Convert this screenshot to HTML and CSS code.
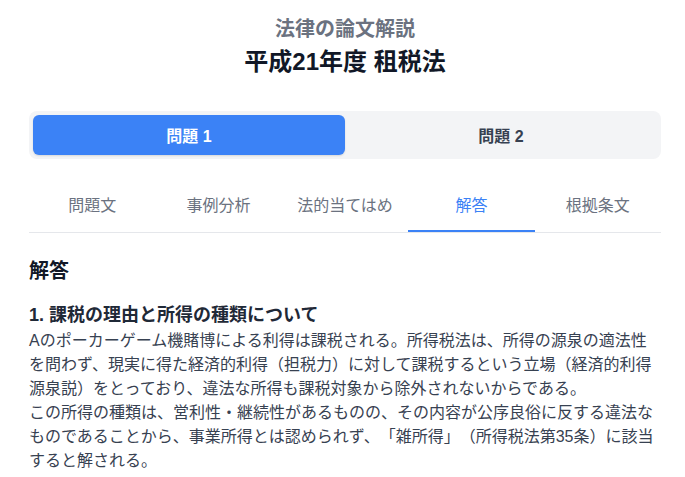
FILE: index.html
```html
<!DOCTYPE html>
<html lang="ja">
<head>
<meta charset="utf-8">
<title>平成21年度 租税法</title>
<link rel="stylesheet" href="styles.css">
</head>
<body>
<div class="page">
  <header class="header">
    <p class="subtitle">法律の論文解説</p>
    <h1 class="title">平成21年度 租税法</h1>
  </header>

  <div class="segment">
    <button class="seg-btn active">問題 1</button>
    <button class="seg-btn">問題 2</button>
  </div>

  <nav class="tabs">
    <div class="tab">問題文</div>
    <div class="tab">事例分析</div>
    <div class="tab">法的当てはめ</div>
    <div class="tab active">解答</div>
    <div class="tab">根拠条文</div>
  </nav>

  <main class="content">
    <h2 class="section-title">解答</h2>
    <h3 class="sub-title">1. 課税の理由と所得の種類について</h3>
    <p class="para">Aのポーカーゲーム機賭博による利得は課税される。所得税法は、所得の源泉の適法性を問わず、現実に得た経済的利得（担税力）に対して課税するという立場（経済的利得源泉説）をとっており、違法な所得も課税対象から除外されないからである。</p>
    <p class="para">この所得の種類は、営利性・継続性があるものの、その内容が公序良俗に反する違法なものであることから、事業所得とは認められず、「雑所得」（所得税法第35条）に該当すると解される。</p>
  </main>
</div>
</body>
</html>
```

FILE: styles.css
```css
* {
  box-sizing: border-box;
}

html, body {
  margin: 0;
  padding: 0;
  background: #ffffff;
}

body {
  font-family: "Liberation Sans", "Noto Sans CJK JP", sans-serif;
  color: #374151;
  text-spacing-trim: space-all;
}

.page {
  padding: 15px 24px 0 29px;
}

.header {
  text-align: center;
  margin-bottom: 33px;
}

.subtitle {
  margin: 0;
  font-size: 20px;
  line-height: 28px;
  font-weight: 700;
  color: #6b7280;
}

.title {
  margin: 3px 0 0;
  font-size: 24px;
  line-height: 32px;
  font-weight: 700;
  color: #111827;
}

.segment {
  display: grid;
  grid-template-columns: 1fr 1fr;
  padding: 4px;
  background: #f3f4f6;
  border-radius: 8px;
}

.seg-btn {
  border: 0;
  margin: 0;
  height: 40px;
  font-family: inherit;
  font-size: 16px;
  font-weight: 700;
  color: #374151;
  background: transparent;
  border-radius: 6px;
  padding: 0;
}

.seg-btn.active {
  background: #3b82f6;
  color: #ffffff;
  box-shadow: 0 1px 2px rgba(0, 0, 0, 0.12);
}

.tabs {
  display: grid;
  grid-template-columns: repeat(5, 1fr);
  margin-top: 23px;
  border-bottom: 1px solid #e5e7eb;
}

.tab {
  text-align: center;
  font-size: 16px;
  line-height: 24px;
  padding: 12px 0;
  color: #6b7280;
  border-bottom: 2px solid transparent;
}

.tab.active {
  color: #3b82f6;
  border-bottom-color: #3b82f6;
}

.content {
  padding-top: 24px;
}

.section-title {
  margin: 0 0 16px;
  font-size: 20px;
  line-height: 28px;
  font-weight: 700;
  color: #111827;
}

.sub-title {
  margin: 0;
  font-size: 18px;
  line-height: 28px;
  font-weight: 700;
  color: #1f2937;
}

.para {
  margin: 0;
  font-size: 16px;
  line-height: 24px;
  color: #374151;
}
```
